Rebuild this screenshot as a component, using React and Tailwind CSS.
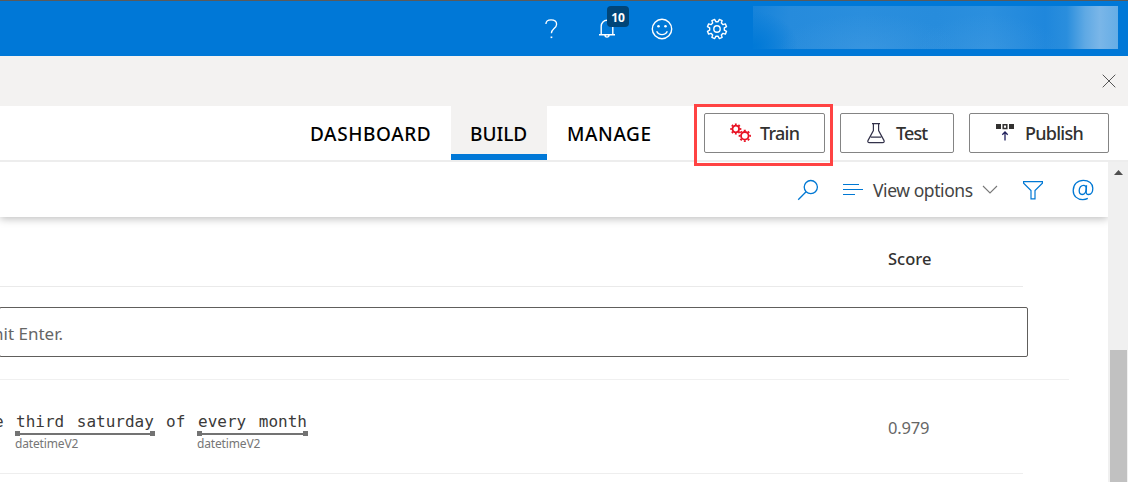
import React from "react";

const gearPath = (cx, cy, rOut, rIn, teeth, turn = 0) => {
  const pts = [];
  const step = (Math.PI * 2) / teeth;
  for (let i = 0; i < teeth; i++) {
    const a = i * step + turn;
    [[-0.3, rIn], [-0.2, rOut], [0.2, rOut], [0.3, rIn]].forEach(([o, r]) => {
      const t = a + o * step;
      pts.push(`${(cx + r * Math.cos(t)).toFixed(2)},${(cy + r * Math.sin(t)).toFixed(2)}`);
    });
  }
  return `M${pts.join("L")}Z`;
};

function Header() {
  return (
    <header className="flex h-14 shrink-0 items-start border-t border-[#5a5a5a] bg-[#0078d7] text-white">
      <svg className="mt-[18px] ml-[544px] h-5 w-4" viewBox="0 0 16 20" fill="none" stroke="currentColor" strokeWidth="1.3">
        <path d="M1.9 5C2 2.2 4 .9 7 .9c3.2 0 5.6 1.7 5.6 4.3 0 4.3-5.2 4.5-5.2 9.1" />
        <path d="M6.6 18.3h1.7" strokeWidth="1.6" />
      </svg>
      <div className="relative mt-[18px] ml-[38px] h-5 w-[18px]">
        <svg className="h-5 w-[18px]" viewBox="0 0 18 20" fill="none" stroke="currentColor" strokeWidth="1.4">
          <path d="M1 15.7h16M3.2 15.7V7.2C3.2 3.7 5.8 1.2 9 1.2s5.8 2.5 5.8 6v8.5M6.9 16c.1 1.4.9 2.1 2.1 2.1s2-.7 2.1-2.1" />
        </svg>
        <span className="absolute -top-[13px] left-[9px] flex h-[21px] w-[22px] items-center justify-center rounded bg-[#004578] pt-[2px] font-['Open_Sans',sans-serif] text-xs font-bold">10</span>
      </div>
      <svg className="mt-[17px] ml-[35px] h-[22px] w-[22px]" viewBox="0 0 22 22" fill="none" stroke="currentColor" strokeWidth="1.4">
        <circle cx="11" cy="11" r="9.7" />
        <path d="M5.7 13.2c1 2.3 2.9 3.4 5.3 3.4s4.3-1.1 5.3-3.4" />
        <circle cx="7.5" cy="8.3" r="1.3" fill="currentColor" stroke="none" />
        <circle cx="14.5" cy="8.3" r="1.3" fill="currentColor" stroke="none" />
      </svg>
      <svg className="mt-[17px] ml-[33px] h-[22px] w-[22px]" viewBox="0 0 22 22" fill="none" stroke="currentColor" strokeWidth="1.4" strokeLinejoin="round">
        <path d={gearPath(11, 11, 9.8, 7.4, 8, Math.PI / 8)} />
        <circle cx="11" cy="11" r="3.2" />
      </svg>
      <div className="mt-[5px] ml-[25px] h-[43px] w-[365px] bg-[linear-gradient(90deg,#1683da_0%,#268bdc_10%,#2a8edd_30%,#278cdc_50%,#2b8fde_65%,#1f87dc_80%,#2a8edd_86%,#5fa9e4_91%,#7ab6e8_95%,#65ade6_100%)]">
        <div className="h-full w-full bg-[radial-gradient(ellipse_90px_35px_at_115px_43px,#4b9fe366,transparent),radial-gradient(ellipse_70px_35px_at_235px_43px,#4b9fe355,transparent),radial-gradient(ellipse_45px_35px_at_0px_40px,#0079d7,transparent)]" />
      </div>
    </header>
  );
}

function ActionButton({ className, icon, label }) {
  return (
    <button className={`flex h-10 shrink-0 items-center rounded-xs border border-[#848484] bg-white text-[18px] font-medium whitespace-nowrap text-[#323130] ${className}`}>
      {icon}
      {label}
    </button>
  );
}

function NavBar() {
  return (
    <nav className="relative z-20 flex h-[56px] shrink-0 items-start border-b-2 border-[#ededed] bg-white text-[19px] font-medium text-black">
      <span className="ml-[310px] h-[54px] w-[141px] pt-[14px] tracking-[0.6px]">DASHBOARD</span>
      <span className="h-[54px] w-24 border-b-6 border-[#0078d7] bg-[#f3f2f1] pt-[14px] pl-[19px]">BUILD</span>
      <span className="ml-5 w-[127px] pt-[14px] tracking-[0.6px]">MANAGE</span>
      <div className="relative -mt-[2px] h-[62px] w-[139px] shrink-0 border-3 border-[#ff4343] pt-[6px] pl-[7px]">
        <ActionButton
          className="w-[121px] pl-[24px] tracking-[-0.75px]"
          label="Train"
          icon={
            <svg className="mr-[9px] h-[22px] w-[22px]" viewBox="0 0 22 22" fill="none" stroke="#e81123">
              <circle cx="6.8" cy="7" r="3.3" strokeWidth="1.8" />
              <circle cx="6.8" cy="7" r="4.7" strokeWidth="1.7" pathLength="16" strokeDasharray="1 1" strokeDashoffset="0.5" />
              <circle cx="15.8" cy="13.8" r="3.8" strokeWidth="1.8" />
              <circle cx="15.8" cy="13.8" r="5.3" strokeWidth="1.7" pathLength="16" strokeDasharray="1 1" strokeDashoffset="0.5" />
            </svg>
          }
        />
      </div>
      <ActionButton
        className="mt-[7px] ml-[7px] w-[114px] pl-[26px] tracking-[-0.9px]"
        label="Test"
        icon={
          <svg className="mr-[11px] h-[22px] w-[18px]" viewBox="0 0 18 22" fill="none" stroke="#33324a" strokeWidth="1.2">
            <path d="M5 1.6h8M6.4 1.6v7L1.2 18.1c-.8 1.5-.3 2.5 1.3 2.5h13c1.6 0 2.1-1 1.3-2.5L11.6 8.6v-7M3.8 15.2h10.4" />
          </svg>
        }
      />
      <ActionButton
        className="mt-[7px] ml-[15px] w-[140px] pl-[26px] tracking-[-0.75px]"
        label="Publish"
        icon={
          <svg className="mr-[11px] h-[22px] w-[18px]" viewBox="0 0 18 22" fill="none">
            <path d="M0 2h5v5H0zM13 2h5v5h-5z" fill="#323130" />
            <path d="M7.2 2.8h3.6v3.6H7.2z" stroke="#323130" strokeWidth="1.5" />
            <path d="M9 18.5V10M6.3 12.7 9 10l2.7 2.7" stroke="#20205c" strokeWidth="1.3" />
          </svg>
        }
      />
    </nav>
  );
}

function Toolbar() {
  return (
    <div className="relative flex h-[55px] shrink-0 items-start bg-white text-[#0078d4] shadow-[0_2px_8px_rgba(0,0,0,0.25)]">
      <svg className="mt-[17px] ml-[797px] h-[22px] w-[22px]" viewBox="0 0 22 22" fill="none" stroke="currentColor" strokeWidth="1.3">
        <circle cx="13.8" cy="8.1" r="6.6" />
        <path d="M9.1 12.8 1.2 20.7" />
      </svg>
      <svg className="mt-[20px] ml-[23px] h-[14px] w-[21px]" viewBox="0 0 21 14" stroke="currentColor" strokeWidth="1.2">
        <path d="M1 2.5h16M1 7.5h20M1 12.5h12" />
      </svg>
      <span className="mt-[14px] ml-[10px] w-[100px] text-[17.5px] leading-7 tracking-[-0.43px] whitespace-nowrap text-[#444]">View options</span>
      <svg className="mt-[23px] ml-[9px] h-[10px] w-4" viewBox="0 0 16 10" fill="none" stroke="#777" strokeWidth="1.1">
        <path d="m1 1 7 7 7-7" />
      </svg>
      <svg className="mt-[17px] ml-[24px] h-[22px] w-[22px]" viewBox="0 0 22 22" fill="none" stroke="currentColor" strokeWidth="1.2">
        <path d="M1.6 2.6h18.8v1.6L13 11.6v8.2H9v-8.2L1.6 4.2z" />
      </svg>
      <svg className="mt-[17px] ml-[28px] h-[22px] w-[22px]" viewBox="0 0 22 22" fill="none" stroke="currentColor" strokeWidth="1.3">
        <path d="M15.8 19.4c-1.4.8-3 1.2-5 1.2-5.6 0-9.6-3.6-9.6-9.2C1.2 5.4 5.4 1.4 11.3 1.4c5.6 0 9.5 3.1 9.5 7.9 0 3.8-1.8 6.2-4.3 6.2-1.6 0-2.4-.9-2.3-2.5l.3-6.8" />
        <path d="M14.2 9.5c0-2-.9-3.2-2.6-3.2-2.5 0-4.4 2.2-4.4 5.3 0 2.5 1 3.9 2.9 3.9 2.2 0 4-2.4 4.1-6z" />
      </svg>
    </div>
  );
}

function Entity({ className, children }) {
  return (
    <span className={`flex flex-col ${className}`}>
      <span className="pl-px">{children}</span>
      <span className="mt-[-2px] flex h-[5px] items-center justify-between bg-[linear-gradient(#737373,#737373)] bg-[length:100%_2px] bg-center bg-no-repeat">
        <span className="h-[5px] w-[5px] bg-[#737373]" />
        <span className="h-[5px] w-[5px] bg-[#737373]" />
      </span>
      <span className="font-['Noto_Sans',sans-serif] text-[12px] leading-[15px] tracking-[-0.15px] text-[#767676] [word-spacing:0]">datetimeV2</span>
    </span>
  );
}

function Content() {
  return (
    <main className="flex flex-1 flex-col text-[17px]">
      <div className="h-[70px] w-[1023px] shrink-0 border-b border-[#eaeaea] pt-[29px] pl-[888px] text-[16.5px] leading-[26px] font-medium text-[#323130]">Score</div>
      <div className="mt-5 flex h-[50px] w-[1029px] shrink-0 -translate-x-px items-center overflow-hidden rounded-xs border border-[#605e5c] pt-[3px] text-[17px] whitespace-nowrap text-[#666]">
        <span className="-ml-[7px]">hit Enter.</span>
      </div>
      <div className="mt-[22px] h-px w-[1069px] shrink-0 bg-[#f0f0f0]" />
      <div className="flex h-[94px] w-[1023px] shrink-0 items-start overflow-hidden border-b border-[#eee]">
        <div className="flex pt-[30px] font-['DejaVu_Sans_Mono',monospace] text-[16px] leading-[23px] whitespace-nowrap text-[#3b3a39] [word-spacing:3px]">
          <span className="-ml-[6px] w-[21px]">e</span>
          <Entity className="w-[140px]">third saturday</Entity>
          <span className="w-[42px] pl-[11px]">of</span>
          <Entity className="w-[111px]">every month</Entity>
        </div>
        <span className="mt-[35px] ml-[580px] text-[16.5px] leading-[26px] tracking-[-0.2px] text-[#666]">0.979</span>
      </div>
    </main>
  );
}

export default function App() {
  return (
    <div className="flex h-[482px] w-[1128px] flex-col overflow-hidden bg-white font-['Noto_Sans',sans-serif]">
      <Header />
      <div className="flex h-[50px] shrink-0 items-center justify-end bg-[#f3f2f1] pr-3">
        <svg className="h-[14px] w-[14px]" viewBox="0 0 14 14" stroke="#555" strokeWidth="1">
          <path d="m.7.7 12.6 12.6M13.3.7.7 13.3" />
        </svg>
      </div>
      <NavBar />
      <div className="flex h-[320px]">
        <div className="flex w-[1108px] shrink-0 flex-col">
          <Toolbar />
          <Content />
        </div>
        <div className="z-10 flex w-5 flex-col items-center bg-[#f0f0f0]">
          <svg className="mt-2 h-[5px] w-[9px]" viewBox="0 0 9 5"><path d="M4.5 0 9 5H0z" fill="#505050" /></svg>
          <div className="mt-[175px] h-[132px] w-[17px] bg-[#c1c1c1]" />
        </div>
      </div>
    </div>
  );
}
